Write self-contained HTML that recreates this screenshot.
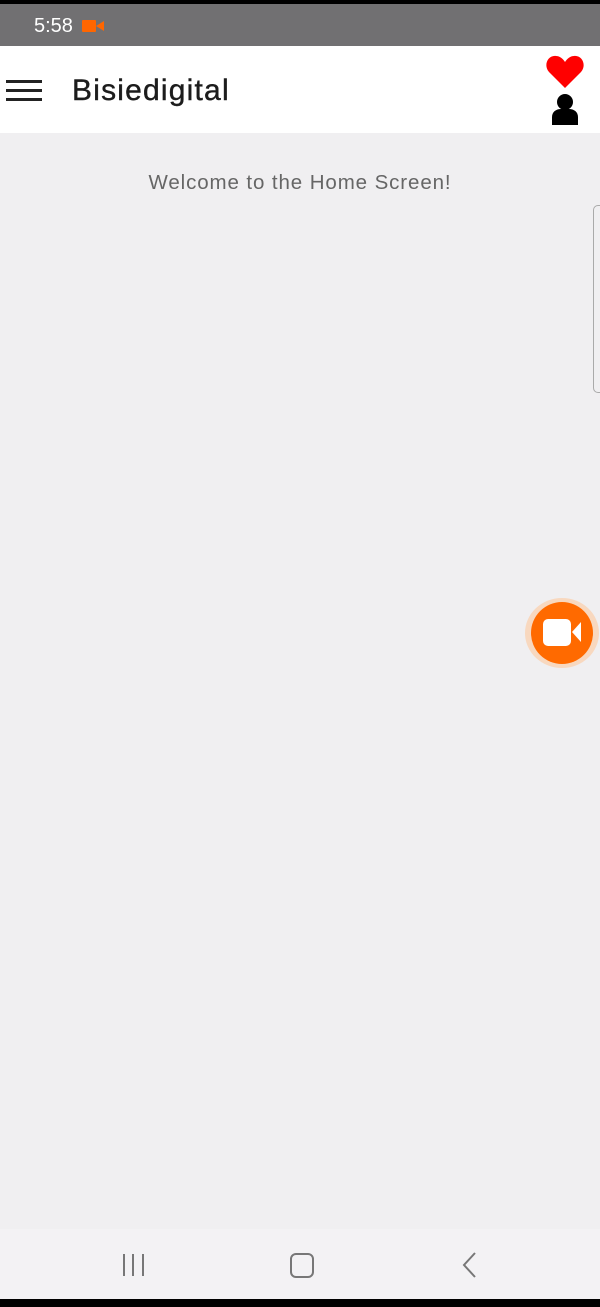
<!DOCTYPE html>
<html><head><meta charset="utf-8"><style>
html,body{margin:0;padding:0;width:600px;height:1307px;overflow:hidden;background:#f0eff1;font-family:"Liberation Sans",sans-serif;position:relative}
.abs{position:absolute}
</style></head><body>
<div class="abs" style="left:0;top:0;width:600px;height:4px;background:#000"></div>
<div class="abs" style="left:0;top:4px;width:600px;height:42px;background:#717072"></div>
<div class="abs" style="left:34px;top:15px;color:#fff;font-size:20px">5:58</div>
<div class="abs" style="left:82px;top:20px;width:14px;height:12px;background:#ff6600;border-radius:1px"></div>
<div class="abs" style="left:96px;top:21px;width:0;height:0;border-top:5px solid transparent;border-bottom:5px solid transparent;border-right:8px solid #ff6600"></div>
<div class="abs" style="left:0;top:46px;width:600px;height:87px;background:#fff"></div>
<div class="abs" style="left:6px;top:80px;width:36px;height:3px;background:#222"></div>
<div class="abs" style="left:6px;top:89px;width:36px;height:3px;background:#222"></div>
<div class="abs" style="left:6px;top:98px;width:36px;height:3px;background:#222"></div>
<div class="abs" style="left:72px;top:74px;font-size:30px;letter-spacing:1.2px;color:#1c1c1c;-webkit-text-stroke:0.4px #1c1c1c">Bisiedigital</div>
<svg class="abs" style="left:545px;top:54px" width="40" height="36" viewBox="0 0 40 36"><path d="M20 34 L4 18 C-2 11 3 1 11 2 C15 2 18 5 20 8 C22 5 25 2 29 2 C37 1 42 11 36 18 Z" fill="#ff0000"/></svg>
<svg class="abs" style="left:550px;top:93px" width="30" height="34" viewBox="0 0 30 34"><circle cx="15" cy="9" r="8" fill="#000"/><path d="M2 32 L2 24 C2 19 6 16 11 16 L19 16 C24 16 28 19 28 24 L28 32 Z" fill="#000"/></svg>
<div class="abs" style="left:0;top:171px;width:600px;text-align:center;font-size:20.5px;letter-spacing:0.9px;color:#666">Welcome to the Home Screen!</div>
<div class="abs" style="left:593px;top:205px;width:12px;height:186px;border:1px solid #aaa;border-radius:5px"></div>
<div class="abs" style="left:525px;top:598px;width:74px;height:70px;border-radius:50%;background:#f8d8bf"></div>
<div class="abs" style="left:531px;top:602px;width:62px;height:62px;border-radius:50%;background:#ff6a00"></div>
<div class="abs" style="left:543px;top:619px;width:28px;height:27px;background:#fff;border-radius:5px"></div>
<div class="abs" style="left:572px;top:622px;width:0;height:0;border-top:10px solid transparent;border-bottom:10px solid transparent;border-right:9px solid #fff"></div>
<div class="abs" style="left:0;top:1229px;width:600px;height:70px;background:#f3f2f4"></div>
<div class="abs" style="left:123px;top:1254px;width:2px;height:22px;background:#777"></div>
<div class="abs" style="left:132px;top:1254px;width:2px;height:22px;background:#777"></div>
<div class="abs" style="left:142px;top:1254px;width:2px;height:22px;background:#777"></div>
<div class="abs" style="left:290px;top:1253px;width:20px;height:21px;border:2px solid #777;border-radius:6px"></div>
<svg class="abs" style="left:460px;top:1251px" width="20" height="28" viewBox="0 0 20 28"><path d="M15 2 L4 14 L15 26" fill="none" stroke="#777" stroke-width="2"/></svg>
<div class="abs" style="left:0;top:1299px;width:600px;height:8px;background:#000"></div>
</body></html>
